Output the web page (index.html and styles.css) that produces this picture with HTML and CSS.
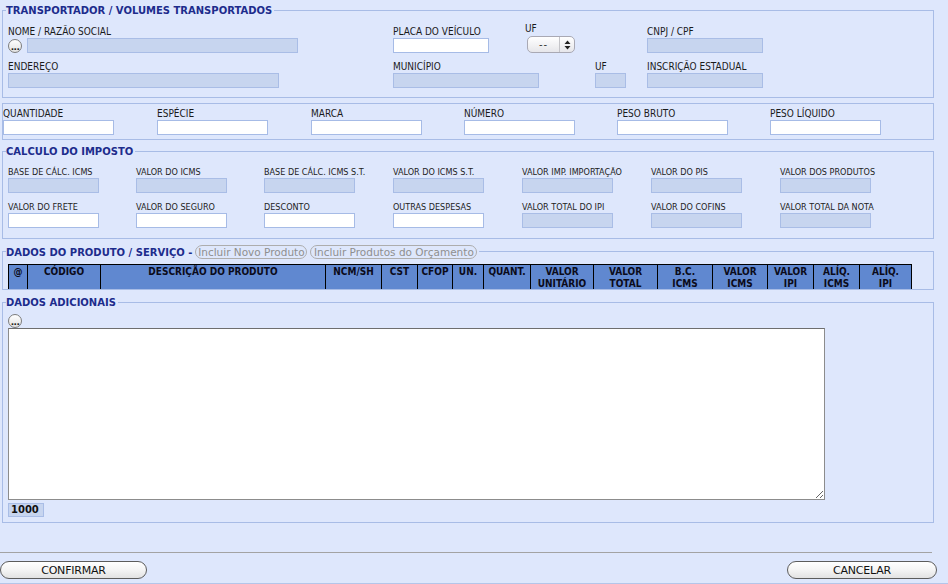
FILE: index.html
```html
<!DOCTYPE html>
<html lang="pt-BR">
<head>
<meta charset="utf-8">
<title>Nota Fiscal - Transportador</title>
<link rel="stylesheet" href="styles.css">
</head>
<body>
<div class="page">
  <fieldset class="box box-transp">
    <legend class="legend">TRANSPORTADOR / VOLUMES TRANSPORTADOS</legend>
    <div class="row row-first">
      <div class="field w385">
        <label class="lbl">NOME / RAZÃO SOCIAL</label>
        <div class="with-btn">
          <span class="dots">...</span>
          <input class="inp ro w271" readonly>
        </div>
      </div>
      <div class="field w132">
        <label class="lbl">PLACA DO VEÍCULO</label>
        <input class="inp w96">
      </div>
      <div class="field w122">
        <label class="lbl">UF</label>
        <div class="select">
          <span class="sel-val">--</span>
          <span class="sel-arrows"><svg width="7" height="10" viewBox="0 0 7 10"><path d="M3.5 0.5 L6.5 4 H0.5 Z M3.5 9.5 L6.5 6 H0.5 Z" fill="#222"/></svg></span>
        </div>
      </div>
      <div class="field">
        <label class="lbl">CNPJ / CPF</label>
        <input class="inp ro w116" readonly>
      </div>
    </div>
    <div class="row row-second">
      <div class="field w385">
        <label class="lbl">ENDEREÇO</label>
        <input class="inp ro w271" readonly>
      </div>
      <div class="field w202">
        <label class="lbl">MUNICÍPIO</label>
        <input class="inp ro w146" readonly>
      </div>
      <div class="field w52">
        <label class="lbl">UF</label>
        <input class="inp ro w31" readonly>
      </div>
      <div class="field">
        <label class="lbl">INSCRIÇÃO ESTADUAL</label>
        <input class="inp ro w116" readonly>
      </div>
    </div>
  </fieldset>

  <fieldset class="box box-vol">
    <div class="vol-grid">
      <div class="field"><label class="lbl">QUANTIDADE</label><input class="inp w111"></div>
      <div class="field"><label class="lbl">ESPÉCIE</label><input class="inp w111"></div>
      <div class="field"><label class="lbl">MARCA</label><input class="inp w111"></div>
      <div class="field"><label class="lbl">NÚMERO</label><input class="inp w111"></div>
      <div class="field"><label class="lbl">PESO BRUTO</label><input class="inp w111"></div>
      <div class="field"><label class="lbl">PESO LÍQUIDO</label><input class="inp w111"></div>
    </div>
  </fieldset>

  <fieldset class="box box-tax">
    <legend class="legend">CALCULO DO IMPOSTO</legend>
    <div class="tax-grid">
      <div class="field"><label class="lbl sm">BASE DE CÁLC. ICMS</label><input class="inp ro w91" readonly></div>
      <div class="field"><label class="lbl sm">VALOR DO ICMS</label><input class="inp ro w91" readonly></div>
      <div class="field"><label class="lbl sm">BASE DE CÁLC. ICMS S.T.</label><input class="inp ro w91" readonly></div>
      <div class="field"><label class="lbl sm">VALOR DO ICMS S.T.</label><input class="inp ro w91" readonly></div>
      <div class="field"><label class="lbl sm">VALOR IMP. IMPORTAÇÃO</label><input class="inp ro w91" readonly></div>
      <div class="field"><label class="lbl sm">VALOR DO PIS</label><input class="inp ro w91" readonly></div>
      <div class="field"><label class="lbl sm">VALOR DOS PRODUTOS</label><input class="inp ro w91" readonly></div>
      <div class="field"><label class="lbl sm">VALOR DO FRETE</label><input class="inp w91"></div>
      <div class="field"><label class="lbl sm">VALOR DO SEGURO</label><input class="inp w91"></div>
      <div class="field"><label class="lbl sm">DESCONTO</label><input class="inp w91"></div>
      <div class="field"><label class="lbl sm">OUTRAS DESPESAS</label><input class="inp w91"></div>
      <div class="field"><label class="lbl sm">VALOR TOTAL DO IPI</label><input class="inp ro w91" readonly></div>
      <div class="field"><label class="lbl sm">VALOR DO COFINS</label><input class="inp ro w91" readonly></div>
      <div class="field"><label class="lbl sm">VALOR TOTAL DA NOTA</label><input class="inp ro w91" readonly></div>
    </div>
  </fieldset>

  <fieldset class="box box-prod">
    <legend class="legend legend-prod">
      <span class="legend-text">DADOS DO PRODUTO / SERVIÇO -</span>
      <span class="pill pill-novo">Incluir Novo Produto</span>
      <span class="pill pill-orc">Incluir Produtos do Orçamento</span>
    </legend>
    <div class="table-wrap">
      <table class="prod-table">
        <colgroup>
          <col style="width:19px"><col style="width:73px"><col style="width:225px"><col style="width:56px">
          <col style="width:36px"><col style="width:35px"><col style="width:31px"><col style="width:47px">
          <col style="width:63px"><col style="width:64px"><col style="width:55px"><col style="width:55px">
          <col style="width:46px"><col style="width:46px"><col style="width:52px">
        </colgroup>
        <thead>
          <tr>
            <th>@</th><th>CÓDIGO</th><th>DESCRIÇÃO DO PRODUTO</th><th>NCM/SH</th><th>CST</th><th>CFOP</th><th>UN.</th><th>QUANT.</th>
            <th>VALOR<br>UNITÁRIO</th><th>VALOR<br>TOTAL</th><th>B.C.<br>ICMS</th><th>VALOR<br>ICMS</th><th>VALOR<br>IPI</th><th>ALÍQ.<br>ICMS</th><th>ALÍQ.<br>IPI</th>
          </tr>
        </thead>
      </table>
    </div>
  </fieldset>

  <fieldset class="box box-add">
    <legend class="legend">DADOS ADICIONAIS</legend>
    <span class="dots">...</span>
    <textarea class="notes"></textarea>
    <div class="counter">1000</div>
  </fieldset>
</div>

<div class="footer">
  <div class="rule"></div>
  <div class="actions">
    <button class="btn btn-ok">CONFIRMAR</button>
    <button class="btn btn-cancel">CANCELAR</button>
  </div>
  <div class="bottom-line"></div>
</div>
</body>
</html>
```

FILE: styles.css
```css
* { box-sizing: border-box; }

body {
  margin: 0;
  background: #dee7fc;
  font-family: "DejaVu Sans Condensed", "DejaVu Sans", sans-serif;
  font-size: 10px;
  color: #1a1a1a;
  overflow: hidden;
}

.page {
  width: 934px;
  padding: 3px 0 0 2px;
}

.box {
  width: 932px;
  margin: 0;
  border: 1px solid #a8bce6;
  min-width: 0;
}

.legend {
  font-family: "DejaVu Sans", sans-serif;
  font-weight: bold;
  font-size: 10px;
  line-height: 12px;
  padding: 2px 2px 0 0;
  margin-left: -2px;
  color: #1d2c8c;
  white-space: nowrap;
}

.lbl {
  display: block;
  line-height: 12px;
  white-space: nowrap;
}

.lbl.sm {
  font-size: 9px;
  line-height: 11px;
}

.inp {
  display: block;
  height: 15px;
  margin: 0;
  padding: 0 2px;
  border: 1px solid #a6bbe6;
  background: #fff;
  font: inherit;
  outline: none;
}

.inp.ro {
  background: #c7d5ef;
  border-color: #a9bde6;
}

.w31 { width: 31px; }
.w91 { width: 91px; }
.w96 { width: 96px; }
.w111 { width: 111px; }
.w116 { width: 116px; }
.w146 { width: 146px; }
.w271 { width: 271px; }

.w52 { width: 52px; flex: none; }
.w122 { width: 122px; flex: none; }
.w132 { width: 132px; flex: none; }
.w202 { width: 202px; flex: none; }
.w385 { width: 385px; flex: none; }

/* transportador */
.box-transp { padding: 6px 5px 9px; }

.row {
  display: flex;
  align-items: flex-end;
}

.row-second { margin-top: 8px; }

.with-btn {
  display: flex;
  align-items: center;
  gap: 5px;
}

.dots {
  display: flex;
  justify-content: center;
  align-items: flex-end;
  width: 14px;
  height: 14px;
  border: 1px solid #7c7c7c;
  border-radius: 50%;
  background: linear-gradient(#ffffff, #e2e2e2);
  font-family: "DejaVu Sans", sans-serif;
  font-weight: bold;
  font-size: 9px;
  line-height: 10px;
  color: #222;
  letter-spacing: -0.6px;
  flex: none;
}

.select {
  display: flex;
  align-items: center;
  width: 48px;
  height: 17px;
  margin: 1px 0 0 2px;
  border: 1px solid #a9a9b4;
  border-radius: 5px;
  background: linear-gradient(#ffffff, #e6e6ea);
}

.sel-val {
  width: 32px;
  text-align: center;
  font-family: "DejaVu Sans", sans-serif;
  font-size: 10px;
  color: #333;
  letter-spacing: 1px;
  border-right: 1px solid #c4c4c8;
  line-height: 15px;
}

.sel-arrows {
  flex: 1;
  display: flex;
  justify-content: center;
}

/* volumes */
.box-vol {
  margin-top: 5px;
  padding: 4px 0;
}

.vol-grid {
  display: grid;
  grid-template-columns: 154px 154px 153px 153px 153px 1fr;
}

/* imposto */
.box-tax {
  margin-top: 4px;
  padding: 9px 5px 10px;
}

.tax-grid {
  display: grid;
  grid-template-columns: 128px 128px 129px 129px 129px 129px 1fr;
  row-gap: 9px;
  color: #222;
}

/* produtos */
.box-prod {
  margin-top: 5px;
  padding: 5px 5px 0;
}

.legend-prod {
  display: flex;
  align-items: center;
  height: 15px;
  padding: 0 2px 0 0;
  line-height: 12px;
}

.legend-text { padding-top: 2px; }

.pill {
  display: inline-block;
  height: 14px;
  margin-left: 3px;
  padding: 0;
  border: 1px solid #adadad;
  border-radius: 7px;
  font-family: "DejaVu Sans", sans-serif;
  font-weight: normal;
  font-size: 10.5px;
  line-height: 12px;
  color: #8f8f8f;
  text-align: center;
  white-space: nowrap;
  overflow: hidden;
}

.pill-novo { width: 112px; }
.pill-orc { width: 167px; }

.table-wrap {
  height: 25px;
  overflow: hidden;
}

.prod-table {
  table-layout: fixed;
  width: 903px;
  border-collapse: collapse;
  border: 1px solid #000;
}

.prod-table th {
  border: 1px solid #000;
  background: #6088d0;
  font-family: "DejaVu Sans Condensed", "DejaVu Sans", sans-serif;
  font-weight: bold;
  font-size: 10px;
  line-height: 12px;
  padding: 1px 0 2px;
  vertical-align: top;
  text-align: center;
  color: #0b0b1a;
  white-space: nowrap;
  overflow: hidden;
}

/* adicionais */
.box-add {
  margin-top: 5px;
  padding: 5px 5px 5px;
}

.notes {
  display: block;
  width: 817px;
  height: 172px;
  margin: 0;
  border: 1px solid #8c8c8c;
  border-top-color: #6e6e6e;
  background: #fff;
  resize: both;
  font: inherit;
}

.counter {
  width: 36px;
  height: 14px;
  margin-top: 3px;
  padding-left: 2px;
  border: 1px solid #a9bde6;
  background: #c7d5ef;
  font-family: "DejaVu Sans", sans-serif;
  font-weight: bold;
  font-size: 10px;
  line-height: 12px;
  color: #111;
}

/* footer */
.footer { width: 948px; }

.rule {
  width: 932px;
  margin-top: 29px;
  border-top: 1px solid #a3a3a3;
}

.actions {
  display: flex;
  justify-content: space-between;
  width: 937px;
  margin-top: 8px;
}

.btn {
  height: 18px;
  margin: 0;
  padding: 1px 0 0;
  border: 1px solid #5c5c5c;
  border-radius: 9px;
  background: linear-gradient(#ffffff 0%, #f4f4f4 50%, #e2e2e2 100%);
  font-family: "DejaVu Sans", sans-serif;
  font-size: 11px;
  line-height: 15px;
  color: #111;
  letter-spacing: -0.2px;
}

.btn-ok { width: 147px; }
.btn-cancel { width: 150px; }

.bottom-line {
  margin-top: 4px;
  border-top: 1px solid #b4c5e9;
}
```
